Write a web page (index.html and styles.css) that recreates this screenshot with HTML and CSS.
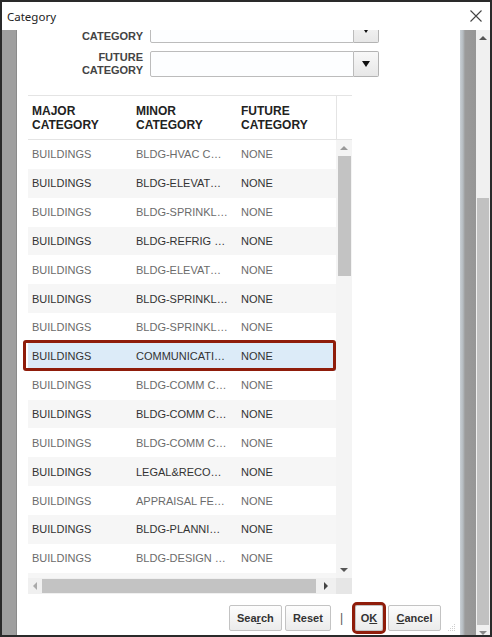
FILE: index.html
```html
<!DOCTYPE html>
<html lang="en">
<head>
    <meta charset="UTF-8">
    <title>Category</title>
    <link rel="stylesheet" href="styles.css">
</head>
<body>
    <div class="dialog">
        <div class="titlebar">
            <span class="title">Category</span>
            <svg class="close" width="12" height="12" viewBox="0 0 12 12">
                <path d="M0.5 0.5 L11.5 11.5 M11.5 0.5 L0.5 11.5" stroke="#444" stroke-width="1.1" fill="none"/>
            </svg>
        </div>
        <div class="frame">
            <div class="edge-left"></div>
            <div class="content">
                <div class="form">
                    <div class="field">
                        <label>MINOR<br>CATEGORY</label>
                        <div class="combo">
                            <div class="combo-input"></div>
                            <div class="combo-btn"><i class="arrow-down"></i></div>
                        </div>
                    </div>
                    <div class="field">
                        <label>FUTURE<br>CATEGORY</label>
                        <div class="combo">
                            <div class="combo-input"></div>
                            <div class="combo-btn"><i class="arrow-down"></i></div>
                        </div>
                    </div>
                </div>

                <div class="grid">
                    <div class="grid-head">
                        <div class="cell c1">MAJOR<br>CATEGORY</div>
                        <div class="cell c2">MINOR<br>CATEGORY</div>
                        <div class="cell c3">FUTURE<br>CATEGORY</div>
                        <div class="cell pad"></div>
                    </div>
                    <div class="grid-body">
                        <div class="rows">
                            <div class="row"><div class="cell c1">BUILDINGS</div><div class="cell c2">BLDG-HVAC COMPONENTS</div><div class="cell c3">NONE</div></div>
                            <div class="row"><div class="cell c1">BUILDINGS</div><div class="cell c2">BLDG-ELEVATORS</div><div class="cell c3">NONE</div></div>
                            <div class="row"><div class="cell c1">BUILDINGS</div><div class="cell c2">BLDG-SPRINKLER SYSTEM</div><div class="cell c3">NONE</div></div>
                            <div class="row"><div class="cell c1">BUILDINGS</div><div class="cell c2">BLDG-REFRIG SYSTEMS</div><div class="cell c3">NONE</div></div>
                            <div class="row"><div class="cell c1">BUILDINGS</div><div class="cell c2">BLDG-ELEVATOR CONTROLS</div><div class="cell c3">NONE</div></div>
                            <div class="row"><div class="cell c1">BUILDINGS</div><div class="cell c2">BLDG-SPRINKLER HEADS</div><div class="cell c3">NONE</div></div>
                            <div class="row"><div class="cell c1">BUILDINGS</div><div class="cell c2">BLDG-SPRINKLER PIPES</div><div class="cell c3">NONE</div></div>
                            <div class="row selected"><div class="cell c1">BUILDINGS</div><div class="cell c2">COMMUNICATIONS</div><div class="cell c3">NONE</div></div>
                            <div class="row"><div class="cell c1">BUILDINGS</div><div class="cell c2">BLDG-COMM CABLING</div><div class="cell c3">NONE</div></div>
                            <div class="row"><div class="cell c1">BUILDINGS</div><div class="cell c2">BLDG-COMM CONDUIT</div><div class="cell c3">NONE</div></div>
                            <div class="row"><div class="cell c1">BUILDINGS</div><div class="cell c2">BLDG-COMM CLOSET</div><div class="cell c3">NONE</div></div>
                            <div class="row"><div class="cell c1">BUILDINGS</div><div class="cell c2">LEGAL&amp;RECORDING FEES</div><div class="cell c3">NONE</div></div>
                            <div class="row"><div class="cell c1">BUILDINGS</div><div class="cell c2">APPRAISAL FEES &amp; COSTS</div><div class="cell c3">NONE</div></div>
                            <div class="row"><div class="cell c1">BUILDINGS</div><div class="cell c2">BLDG-PLANNING FEES</div><div class="cell c3">NONE</div></div>
                            <div class="row"><div class="cell c1">BUILDINGS</div><div class="cell c2">BLDG-DESIGN FEES</div><div class="cell c3">NONE</div></div>
                            <div class="row"><div class="cell c1">BUILDINGS</div><div class="cell c2">BLDG-DESIGN PERMITS</div><div class="cell c3">NONE</div></div>
                        </div>
                        <div class="vbar">
                            <div class="vbar-btn"><i class="tri-up"></i></div>
                            <div class="vbar-thumb"></div>
                            <div class="vbar-space"></div>
                            <div class="vbar-btn"><i class="tri-down"></i></div>
                        </div>
                    </div>
                    <div class="hbar">
                        <div class="hbar-track">
                            <div class="hbar-btn"><i class="tri-left"></i></div>
                            <div class="hbar-thumb"></div>
                            <div class="hbar-btn right"><i class="tri-right"></i></div>
                        </div>
                        <div class="hbar-corner"></div>
                    </div>
                </div>

                <div class="actions">
                    <button class="btn btn-search">Sea<u>r</u>ch</button>
                    <button class="btn btn-reset">Reset</button>
                    <span class="sep">|</span>
                    <button class="btn btn-ok">O<u>K</u></button>
                    <button class="btn btn-cancel"><u>C</u>ancel</button>
                </div>

                <svg class="grip" width="10" height="10" viewBox="0 0 10 10">
                    <g fill="#cfcfcf">
                        <rect x="8" y="2" width="1" height="1"/>
                        <rect x="6" y="4" width="1" height="1"/><rect x="8" y="4" width="1" height="1"/>
                        <rect x="4" y="6" width="1" height="1"/><rect x="6" y="6" width="1" height="1"/><rect x="8" y="6" width="1" height="1"/>
                        <rect x="2" y="8" width="1" height="1"/><rect x="4" y="8" width="1" height="1"/><rect x="6" y="8" width="1" height="1"/><rect x="8" y="8" width="1" height="1"/>
                    </g>
                </svg>
            </div>
            <div class="edge-right"></div>
            <div class="page-scroll">
                <div class="page-btn"><i class="tri-up dark"></i></div>
                <div class="page-thumb"></div>
                <div class="page-btn bottom"><i class="tri-down dark"></i></div>
            </div>
        </div>
    </div>
</body>
</html>
```

FILE: styles.css
```css
/* Category dialog */
* {
    box-sizing: border-box;
}
body {
    margin: 0;
    font-family: "Liberation Sans", Arial, sans-serif;
    background: #fff;
}
.dialog {
    width: 492px;
    height: 637px;
    border: 2px solid #2a2a2a;
    display: flex;
    flex-direction: column;
    background: #fff;
    overflow: hidden;
}
.titlebar {
    height: 28px;
    flex-shrink: 0;
    display: flex;
    align-items: center;
    justify-content: space-between;
    padding: 0 8px 0 5px;
}
.title {
    font-family: "Noto Sans", sans-serif;
    font-size: 11.5px;
    color: #222;
}
.frame {
    flex: 1;
    min-height: 0;
    display: flex;
}
.edge-left {
    width: 15px;
    background: #9f9f9f;
    border-right: 1px solid #8b8b8b;
}
.edge-right {
    width: 16px;
    background: linear-gradient(to right, #c9d0d6 0, #b4bbc0 3px, #9b9b9b 5px, #969696 100%);
}
.content {
    width: 443px;
    overflow: hidden;
    display: flex;
    flex-direction: column;
    position: relative;
}

/* search form */
.form {
    margin-top: -13px;
    display: flex;
    flex-direction: column;
    gap: 8px;
}
.field {
    height: 26px;
    display: flex;
    align-items: center;
    gap: 7px;
}
.field label {
    width: 126px;
    text-align: right;
    font-size: 11px;
    font-weight: bold;
    line-height: 13px;
    color: #444;
}
.combo {
    display: flex;
}
.combo-input {
    width: 204px;
    height: 26px;
    border: 1px solid #bcbcbc;
    border-radius: 2px 0 0 2px;
    background: #fdfeff;
}
.combo-btn {
    width: 25px;
    height: 26px;
    border: 1px solid #b3b3b3;
    border-left: none;
    border-radius: 0 2px 2px 0;
    background: linear-gradient(#f8f8f8, #e7e7e7);
    display: flex;
    align-items: center;
    justify-content: center;
}
.arrow-down {
    border-left: 4px solid transparent;
    border-right: 4px solid transparent;
    border-top: 6px solid #111;
}

/* results grid */
.grid {
    margin: 18px 0 0 11px;
    width: 324px;
}
.grid-head {
    height: 45px;
    display: flex;
    border-top: 1px solid #e4e4e4;
    border-bottom: 1px solid #e4e4e4;
}
.grid-head .cell {
    display: flex;
    align-items: center;
    padding-left: 4px;
    font-size: 12px;
    font-weight: bold;
    line-height: 14px;
    color: #222;
}
.c1 { width: 104px; }
.c2 { width: 105px; }
.c3 { width: 99px; }
.grid-head .pad {
    width: 16px;
    border-left: 1px solid #e4e4e4;
}
.grid-body {
    height: 438px;
    display: flex;
    clip-path: inset(0 0 0 -8px);
}
.rows {
    width: 308px;
}
.row {
    height: 28.85px;
    display: flex;
    align-items: center;
    font-size: 11px;
    color: #6b6b6b;
}
.row:nth-child(even) {
    background: #f6f6f6;
    color: #333;
}
.row .cell {
    padding: 0 9px 0 4px;
    white-space: nowrap;
    overflow: hidden;
    text-overflow: ellipsis;
}
.row.selected {
    background: #dcebf8;
    color: #333;
    position: relative;
}
.row.selected::after {
    content: "";
    position: absolute;
    left: -5px;
    right: 0;
    top: -2px;
    bottom: 0;
    border: 3px solid #8f1d0b;
    border-radius: 3px;
}

/* scrollbars */
.vbar {
    width: 16px;
    background: #f4f4f4;
    display: flex;
    flex-direction: column;
    align-items: center;
}
.vbar-btn {
    height: 16px;
    width: 16px;
    display: flex;
    align-items: center;
    justify-content: center;
}
.vbar-thumb {
    width: 13px;
    height: 120px;
    background: #c3c3c3;
}
.vbar-space {
    flex: 1;
}
.hbar {
    height: 16px;
    display: flex;
}
.hbar-track {
    width: 308px;
    display: flex;
    align-items: center;
    background: #f0f0f0;
}
.hbar-btn {
    width: 14px;
    height: 16px;
    display: flex;
    align-items: center;
    justify-content: center;
}
.hbar-thumb {
    width: 274px;
    height: 14px;
    background: #c3c3c3;
}
.hbar-btn.right {
    width: 20px;
}
.hbar-corner {
    width: 16px;
    background: #e6e6e6;
}
.tri-up {
    border-left: 4px solid transparent;
    border-right: 4px solid transparent;
    border-bottom: 4px solid #9a9a9a;
}
.tri-down {
    border-left: 4px solid transparent;
    border-right: 4px solid transparent;
    border-top: 4px solid #555;
}
.tri-left {
    border-top: 4px solid transparent;
    border-bottom: 4px solid transparent;
    border-right: 4px solid #aaa;
}
.tri-right {
    border-top: 4px solid transparent;
    border-bottom: 4px solid transparent;
    border-left: 4px solid #444;
}
.tri-up.dark {
    border-bottom-color: #555;
}
.tri-down.dark {
    border-top-color: #888;
}

/* buttons */
.actions {
    margin-top: 11px;
    padding-right: 19px;
    display: flex;
    justify-content: flex-end;
    align-items: center;
}
.btn {
    height: 26px;
    padding: 0;
    border: 1px solid #c3c3c3;
    border-radius: 2px;
    background: linear-gradient(#fdfdfd, #ebebeb);
    font-family: "Liberation Sans", Arial, sans-serif;
    font-size: 11px;
    font-weight: bold;
    color: #333;
}
.btn-search { width: 53px; }
.btn-reset { width: 46px; margin-left: 3px; }
.btn-ok {
    width: 28px;
    outline: 3px solid #8f1d0b;
    border-radius: 2px;
}
.btn-cancel { width: 53px; margin-left: 5px; }
.sep {
    margin: 0 12px 0 9px;
    font-size: 12px;
    color: #555;
}
.grip {
    position: absolute;
    right: 4px;
    bottom: 3px;
}

/* page scrollbar */
.page-scroll {
    width: 14px;
    background: #f0f0f0;
    display: flex;
    flex-direction: column;
    align-items: center;
}
.page-btn {
    height: 16px;
    width: 14px;
    display: flex;
    align-items: center;
    justify-content: center;
}
.page-thumb {
    margin-top: 152px;
    width: 12px;
    height: 427px;
    background: #c1c1c1;
}
.page-btn.bottom {
    height: 10px;
    align-items: flex-end;
}
```
